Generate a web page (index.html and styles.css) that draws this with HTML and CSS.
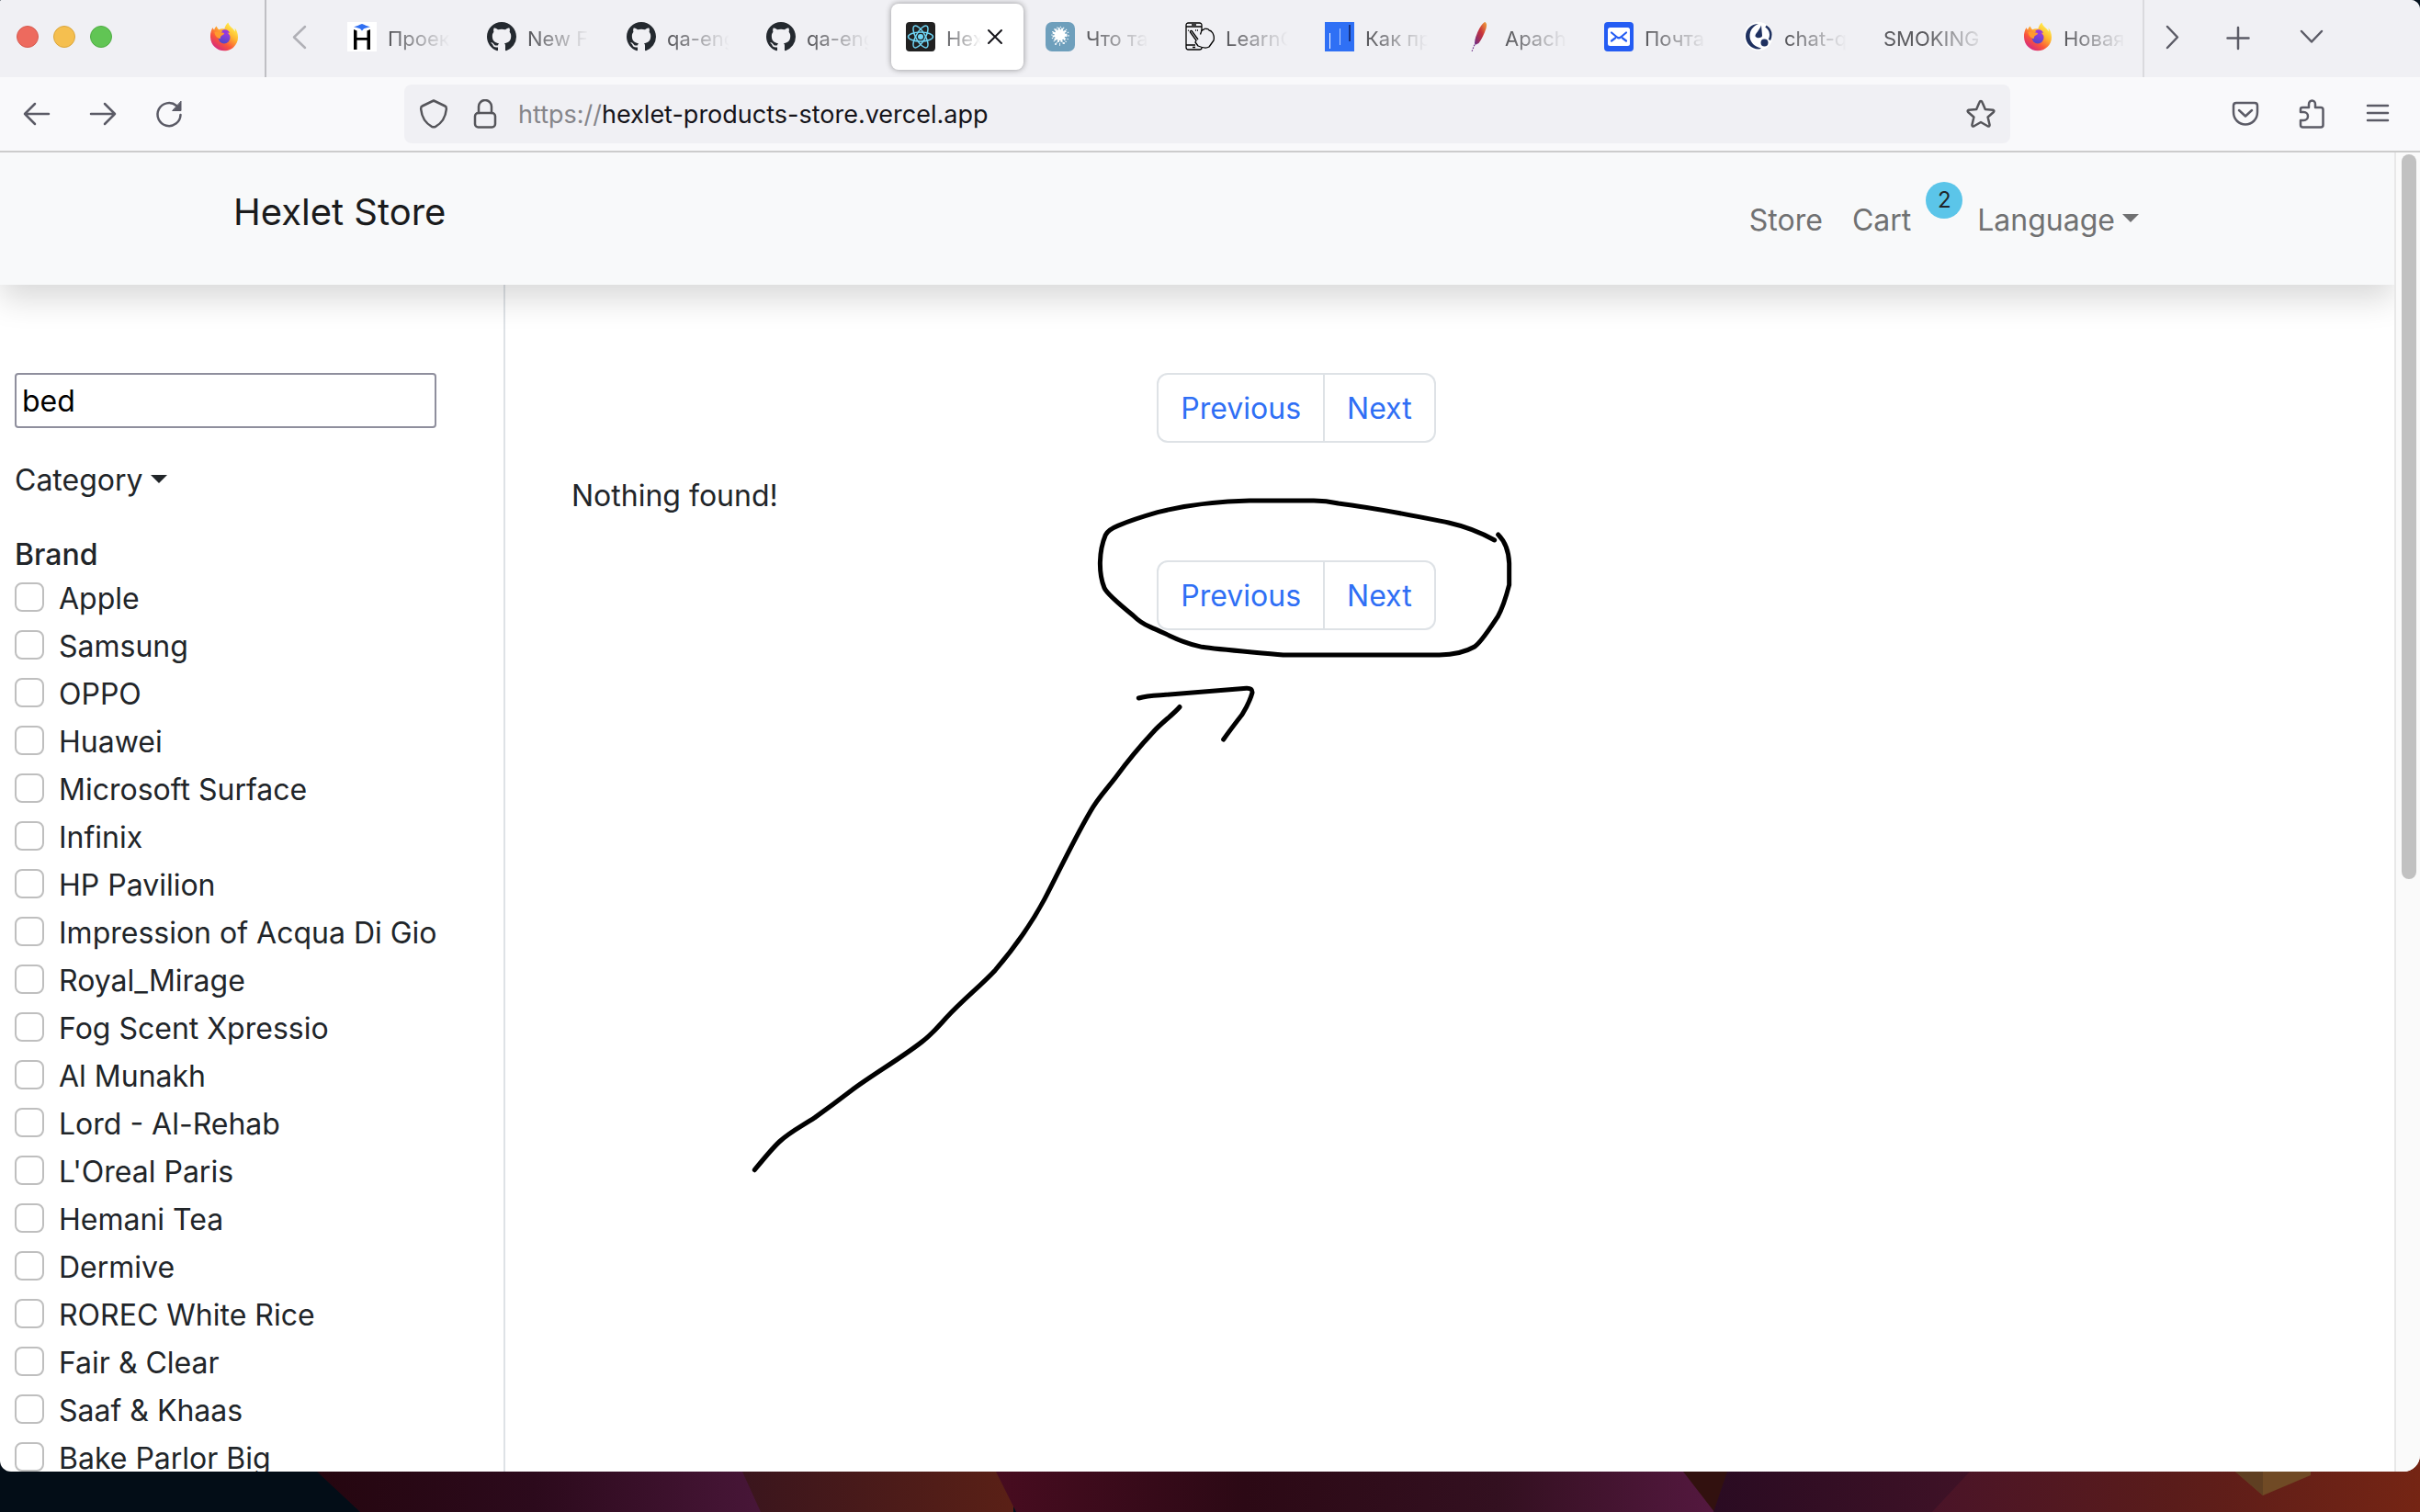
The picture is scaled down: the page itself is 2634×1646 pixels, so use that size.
FILE: index.html
```html
<!DOCTYPE html>
<html lang="en">
<head>
<meta charset="utf-8">
<meta name="viewport" content="width=device-width, initial-scale=1">
<title>Hexlet Store</title>
<link rel="stylesheet" href="styles.css">
</head>
<body>
<svg class="sprite" aria-hidden="true">
  <defs>
    <linearGradient id="fx-body" x1="0.85" y1="0.1" x2="0.2" y2="1">
      <stop offset="0" stop-color="#fff44f"/><stop offset="0.35" stop-color="#ffb22e"/>
      <stop offset="0.65" stop-color="#f9553b"/><stop offset="1" stop-color="#d0208c"/>
    </linearGradient>
    <linearGradient id="fx-globe" x1="0.6" y1="0" x2="0.3" y2="1">
      <stop offset="0" stop-color="#a43be0"/><stop offset="1" stop-color="#4a48c8"/>
    </linearGradient>
    <linearGradient id="feather" x1="1" y1="0" x2="0" y2="1">
      <stop offset="0" stop-color="#f2a63a"/><stop offset="0.45" stop-color="#c8323a"/><stop offset="1" stop-color="#6d2c86"/>
    </linearGradient>
    <symbol id="firefox" viewBox="0 0 32 32">
      <path fill="url(#fx-body)" d="M20.5 0.5c-2 1.600-3.600 4.200-4.200 7-2-.7-4.300-.4-6 .8C9 7.400 8 5.800 7.900 4.600 6.500 5.500 5.500 7 5.200 8.600 4.400 8 3.800 7 3.600 6 1.700 9 .8 12.500 1 16.500 1.300 25 8 31.300 16 31.300S31 25 31 16.800c0-4.500-1.500-8.300-3.500-10.300.3 1.300.4 2.600.2 3.900C26 6 21.500 5.500 20.500.5z"/>
      <circle cx="16" cy="17" r="6.500" fill="url(#fx-globe)"/>
      <path fill="#9538dc" d="M13 10c3-3.500 8-1.500 9 2-2-.8-3.800.5-5 .5z"/>
      <path fill="#ff9a2e" d="M5.500 11c3-1 5 .2 7.500.6 1.200.2 3 .1 3 .8-.2 1.500-2.600 1.800-3.600 3-.6.900-.3 2.200-1.200 2.800-3-.700-5.400-3.500-5.700-7.200z"/>
    </symbol>
    <symbol id="github" viewBox="0 0 16 16">
      <path fill="#24292f" d="M8 0C3.580 0 0 3.580 0 8c0 3.540 2.290 6.530 5.470 7.590.4.070.55-.17.55-.38 0-.19-.010-.82-.010-1.490-2.010.37-2.530-.49-2.690-.94-.09-.23-.48-.94-.82-1.130-.28-.15-.68-.52-.01-.53.63-.01 1.080.58 1.230.82.72 1.210 1.870.87 2.330.66.07-.52.28-.87.51-1.070-1.780-.2-3.640-.89-3.640-3.950 0-.87.31-1.590.82-2.150-.08-.2-.36-1.020.08-2.120 0 0 .67-.21 2.200.82.64-.18 1.320-.27 2-.27s1.360.09 2 .27c1.530-1.040 2.200-.82 2.200-.82.44 1.100.16 1.920.08 2.120.51.56.82 1.270.82 2.150 0 3.070-1.870 3.750-3.650 3.950.29.25.54.73.54 1.480 0 1.070-.01 1.930-.01 2.200 0 .21.15.46.55.38A8.010 8.010 0 0 0 16 8c0-4.420-3.580-8-8-8z"/>
    </symbol>
  </defs>
</svg>

<div class="window">
  <div class="tabstrip">
    <div class="pinned">
      <span class="light light-close"></span><span class="light light-min"></span><span class="light light-max"></span>
      <button class="pin" type="button" aria-label="Firefox"><svg class="ico32"><use href="#firefox"/></svg></button>
    </div>
    <button class="scroll-left" type="button" aria-label="Scroll tabs left"><svg class="line-icon muted" viewBox="0 0 32 32" width="32" height="32"><path d="M22 5L10 16.500 22 28"/></svg></button>
    <div class="tabs" role="tablist">
      <button class="tab" role="tab" type="button">
        <svg class="ico32" viewBox="0 0 32 32"><path fill="#fff" d="M0 0h32v32H0z"/><path fill="#2f6ff2" d="M16 2c3 .8 5 2.500 9 3.200-3 1-5 1.200-7 2L16 9.500 14 7.200c-2-.8-4-1-7-2C11 4.500 13 2.800 16 2z"/><path fill="#000" d="M7 8l3.500 1.500V17h11V9.500L25 8v22h-3.500V19.800h-11V30H7z"/></svg>
        <span class="tab-label">Проекты</span></button>
      <button class="tab" role="tab" type="button"><svg class="ico32"><use href="#github"/></svg><span class="tab-label">New File</span></button>
      <button class="tab" role="tab" type="button"><svg class="ico32"><use href="#github"/></svg><span class="tab-label">qa-engine</span></button>
      <button class="tab" role="tab" type="button"><svg class="ico32"><use href="#github"/></svg><span class="tab-label">qa-engine</span></button>
      <button class="tab active" role="tab" type="button" aria-selected="true">
        <svg class="ico32" viewBox="0 0 32 32"><rect width="32" height="32" rx="4" fill="#212121"/><g fill="none" stroke="#6fd5f5" stroke-width="1.500"><ellipse cx="16" cy="16" rx="13.500" ry="5"/><ellipse cx="16" cy="16" rx="13.500" ry="5" transform="rotate(60 16 16)"/><ellipse cx="16" cy="16" rx="13.500" ry="5" transform="rotate(120 16 16)"/></g><circle cx="16" cy="16" r="3" fill="#6fd5f5"/></svg>
        <span class="tab-label">Hexlet</span>
        <svg class="tab-close" viewBox="0 0 18 18"><path d="M2 2l14 14M16 2L2 16"/></svg></button>
      <button class="tab" role="tab" type="button">
        <svg class="ico32" viewBox="0 0 32 32"><rect width="32" height="32" rx="7" fill="#6e9fbc"/><circle cx="15.500" cy="14" r="6" fill="#fff"/><g fill="none" stroke="#fff"><circle cx="15.500" cy="14" r="6.500" stroke-width="3" stroke-dasharray="2 1.500"/><circle cx="16" cy="14.500" r="9" stroke-width="1.500" stroke-dasharray="1 2.500"/><path d="M10 24h2M15 25h1M19 23h2" stroke-width="1.500"/></g></svg>
        <span class="tab-label">Что такое</span></button>
      <button class="tab" role="tab" type="button">
        <svg class="ico32" viewBox="0 0 32 32" fill="none" stroke="#000" stroke-width="1.300" stroke-linejoin="round"><path d="M18 10V3.500Q18 1 15.500 1h-12Q1 1 1 3.500v24Q1 30 3.500 30h12q2.500 0 2.500-2M1 5h17M1 25h10M7 3h5M8 27.500h3"/><path d="M14 19L7 9.500q-1.500-.5-1.500 1.500L12 20l-1 2 3 4q8 3.500 12 1l5-7q1-4-1-8-2-3-4-3-1-2-3-1.500-2-1-3 1-2-.5-2.500 2l-1 3"/><path d="M3 9l2 1M11 9h3" stroke-dasharray="1 1"/></svg>
        <span class="tab-label">LearnQA</span></button>
      <button class="tab" role="tab" type="button">
        <svg class="ico32" viewBox="0 0 32 32"><path fill="#2f70f5" d="M0 0h32v32H0z"/><path fill="#fff" d="M5 12h1v17H5z"/><path fill="#b8d0ff" d="M16 7h1v18h-1z"/><path fill="#16307c" d="M26 3h2v18h-2z"/></svg>
        <span class="tab-label">Как пройти</span></button>
      <button class="tab" role="tab" type="button">
        <svg class="ico32" viewBox="0 0 32 32"><path fill="url(#feather)" d="M22 0c2.500.5 2.500 4 1.500 7-2 6-5 12-8 16l-4 2c-1-3 0-8 2-12 2-5 5-11 8.500-13z"/><path fill="none" stroke="#6d2c86" stroke-width="1.200" stroke-dasharray="1.500 1.500" d="M12 22l-4 10"/></svg>
        <span class="tab-label">Apache</span></button>
      <button class="tab" role="tab" type="button">
        <svg class="ico32" viewBox="0 0 32 32"><rect width="32" height="32" rx="4" fill="#245cf3"/><rect x="4" y="6" width="24" height="20" rx="2.500" fill="#fff"/><path d="M8 11.500l6 5q2 1.500 4 0l6-5M8 20.500l4-3M24 20.500l-4-3" fill="none" stroke="#245cf3" stroke-width="2.200" stroke-linecap="round"/></svg>
        <span class="tab-label">Почта Mail</span></button>
      <button class="tab" role="tab" type="button">
        <svg class="ico32" viewBox="0 0 32 32"><circle cx="16" cy="15.500" r="15.500" fill="#fff"/><path fill="#1f3160" d="M16 2C8 2 2 8 2 15.500S8 29.500 16 29.500q2 0 3-1C12 27 6.500 22 6.500 15.500 6.500 9 10 4.500 16 2z"/><path fill="#1f3160" d="M19 3.500l1 11c.5 3-6 4-7.500 1C12 13 17 9 19 3.500z"/><circle cx="22.500" cy="22.500" r="4" fill="#1f3160"/><path d="M24 4.500c5 3.500 6.500 9 4 15" fill="none" stroke="#1f3160" stroke-width="2.500"/></svg>
        <span class="tab-label">chat-quiz</span></button>
      <button class="tab" role="tab" type="button"><span class="tab-label">SMOKING</span></button>
      <button class="tab" role="tab" type="button"><svg class="ico32"><use href="#firefox"/></svg><span class="tab-label">Новая вкладка</span></button>
    </div>
    <div class="tab-tools">
      <button type="button" aria-label="Scroll tabs right"><svg class="line-icon" viewBox="0 0 32 32" width="32" height="32"><path d="M11 5l11 11.500L11 28"/></svg></button>
      <button type="button" aria-label="New tab"><svg class="line-icon" viewBox="0 0 32 32" width="32" height="32"><path d="M16 6v23M4.500 17.500h23"/></svg></button>
      <button class="all-tabs" type="button" aria-label="List all tabs"><svg class="line-icon" viewBox="0 0 32 32" width="32" height="32"><path d="M5 10l11 11.500L27 10"/></svg></button>
    </div>
  </div>

  <div class="toolbar">
    <div class="nav-buttons">
      <button type="button" aria-label="Back"><svg class="line-icon" viewBox="0 0 32 32" width="32" height="32"><path d="M29 16H3M14 5L3 16l11 11"/></svg></button>
      <button type="button" aria-label="Forward"><svg class="line-icon" viewBox="0 0 32 32" width="32" height="32"><path d="M3 16h26M18 5l11 11-11 11"/></svg></button>
      <button type="button" aria-label="Reload"><svg class="line-icon" viewBox="0 0 32 32" width="32" height="32"><path d="M28.500 17A12.500 12.500 0 1 1 24 7"/><path class="fill" d="M29 2.500v10h-9z"/></svg></button>
    </div>
    <div class="urlbar">
      <svg class="line-icon dark" viewBox="0 0 32 32" width="32" height="32"><path d="M16 1.500L28.500 7.500Q30 8 29.800 11 28.500 24 18 29.800q-2 1-4 0Q3.500 24 2.200 11 2 8 3.500 7.500z"/></svg>
      <svg class="line-icon dark" viewBox="0 0 32 32" width="32" height="32"><rect x="5" y="15" width="22" height="15.500" rx="3.500"/><path d="M9 15V8a7 7 0 0 1 14 0v7"/></svg>
      <p class="url"><span>https://</span>hexlet-products-store.vercel.app</p>
      <button type="button" aria-label="Bookmark this page"><svg class="line-icon dark" viewBox="0 0 32 32" width="32" height="32"><path d="M16 2q1 0 1.600 1.500l3.200 7.500 8.500.8q1.800.5.600 2.200l-6.300 5.500 2 8.500q0 2-1.800 1.500L16 25l-7.800 4.500q-1.800.5-1.800-1.500l2-8.500L2.100 14q-1.200-1.700.6-2.200l8.500-.8 3.200-7.500Q15 2 16 2z"/></svg></button>
    </div>
    <div class="tools">
      <button type="button" aria-label="Save to Pocket"><svg class="line-icon" viewBox="0 0 32 32" width="32" height="32"><path d="M6 4h20q3 0 3 3v7c0 8-6 13.500-13 13.500S3 22 3 14V7q0-3 3-3z"/><path d="M9 12l7 6.500 7-6.500"/></svg></button>
      <button type="button" aria-label="Extensions"><svg class="line-icon" viewBox="0 0 32 32" width="32" height="32"><path d="M4 13v-2q0-2 2-2h7V5.500a3.500 4 0 0 1 7 0V9h6q2.500 0 2.500 2.500V28q0 2.500-2.500 2.500H6.500Q4 30.500 4 28v-5h3.500a4.500 4.500 0 0 0 0-9H4z"/></svg></button>
      <button type="button" aria-label="Menu"><svg class="line-icon" viewBox="0 0 32 32" width="32" height="32"><path d="M5 7h22M5 15h22M5 23h22"/></svg></button>
    </div>
  </div>

  <div class="viewport">
    <div class="page">
      <header class="store-header">
        <a class="brand" href="#">Hexlet Store</a>
        <nav class="store-nav">
          <a href="#">Store</a>
          <a href="#">Cart</a>
          <span class="badge">2</span>
          <a class="dropdown" href="#">Language</a>
        </nav>
      </header>
      <div class="store-body">
        <aside class="filters">
          <input class="search" type="text" value="bed" aria-label="Search">
          <button class="dropdown category" type="button">Category</button>
          <fieldset class="brands">
            <legend>Brand</legend>
            <label><input type="checkbox">Apple</label>
            <label><input type="checkbox">Samsung</label>
            <label><input type="checkbox">OPPO</label>
            <label><input type="checkbox">Huawei</label>
            <label><input type="checkbox">Microsoft Surface</label>
            <label><input type="checkbox">Infinix</label>
            <label><input type="checkbox">HP Pavilion</label>
            <label><input type="checkbox">Impression of Acqua Di Gio</label>
            <label><input type="checkbox">Royal_Mirage</label>
            <label><input type="checkbox">Fog Scent Xpressio</label>
            <label><input type="checkbox">Al Munakh</label>
            <label><input type="checkbox">Lord - Al-Rehab</label>
            <label><input type="checkbox">L'Oreal Paris</label>
            <label><input type="checkbox">Hemani Tea</label>
            <label><input type="checkbox">Dermive</label>
            <label><input type="checkbox">ROREC White Rice</label>
            <label><input type="checkbox">Fair &amp; Clear</label>
            <label><input type="checkbox">Saaf &amp; Khaas</label>
            <label><input type="checkbox">Bake Parlor Big</label>
          </fieldset>
        </aside>
        <main class="results">
          <nav class="pagination" aria-label="Pages, top"><a href="#">Previous</a><a href="#">Next</a></nav>
          <p class="empty">Nothing found!</p>
          <nav class="pagination" aria-label="Pages, bottom"><a href="#">Previous</a><a href="#">Next</a></nav>
        </main>
      </div>
    </div>
    <div class="scrollbar"><div class="thumb"></div></div>
  </div>
</div>

<svg class="wallpaper" viewBox="0 0 2634 60" preserveAspectRatio="none" aria-hidden="true">
  <defs>
    <linearGradient id="w1"><stop offset="0" stop-color="#25060f"/><stop offset="0.5" stop-color="#2c0a1c"/><stop offset="1" stop-color="#481638"/></linearGradient>
    <linearGradient id="w2"><stop offset="0" stop-color="#3a151d"/><stop offset="1" stop-color="#5a2016"/></linearGradient>
    <linearGradient id="w3"><stop offset="0" stop-color="#480c20"/><stop offset="0.35" stop-color="#2c0915"/><stop offset="0.7" stop-color="#331020"/><stop offset="1" stop-color="#54183f"/></linearGradient>
    <linearGradient id="w4"><stop offset="0" stop-color="#2a0b22"/><stop offset="1" stop-color="#421327"/></linearGradient>
    <linearGradient id="w5"><stop offset="0" stop-color="#4a1428"/><stop offset="0.5" stop-color="#5a1c1a"/><stop offset="1" stop-color="#752514"/></linearGradient>
  </defs>
  <path fill="#030d17" d="M0 0h400v60H0z"/>
  <path fill="url(#w1)" d="M336 0h480l14 60H392L345 16z"/>
  <path fill="url(#w2)" d="M803 0h300v60H828L808 16z"/>
  <path fill="#32110f" d="M1820 0h70v60h-40z"/>
  <path fill="url(#w3)" d="M1080 0h747l5 16 34 44h-760l-22-44z"/>
  <path fill="url(#w4)" d="M1883 0h300v60h-318l15-44z"/>
  <path fill="url(#w5)" d="M2151 0h483v60h-531l41-44z"/>
  <path fill="#704a25" d="M2428 0h87v20l-52 22-30-26z"/>
  <path fill="#5f3f22" d="M2428 0h35v42l-30-26z"/>
</svg>

<svg class="annotation" viewBox="0 0 2634 1646" aria-hidden="true">
  <g transform="translate(1180 380) scale(0.33333)">
    <path d="M1340 624Q1270 585 1190 567C1080 545 960 520 830 504Q790 495 750 495H540C430 497 340 508 240 533Q160 556 110 577Q78 590 70 607C48 660 46 730 66 780Q74 800 160 870Q185 895 215 907C280 935 320 960 385 973C440 982 560 990 650 999H1160Q1230 998 1275 972C1295 960 1330 905 1350 875Q1370 840 1388 770V700Q1386 640 1352 606"/>
    <path d="M178 1140Q200 1133 250 1130L530 1108Q550 1107 549 1122Q540 1155 515 1195Q480 1240 455 1275"/>
  </g>
  <path transform="translate(790 740) scale(0.33333 0.35714)" d="M1482 83C1460 107 1420 133 1395 160Q1330 225 1275 295C1240 338 1215 360 1190 402C1130 498 1080 600 1040 670Q980 775 880 885C830 935 780 970 720 1030Q670 1083 640 1104C570 1155 480 1203 410 1252Q350 1295 290 1335C240 1365 210 1378 175 1408Q150 1430 94 1494"/>
</svg>
</body>
</html>
```
FILE: styles.css
```css
*, *::before, *::after { box-sizing: border-box; }

body {
  margin: 0;
  height: 100vh;
  display: flex;
  flex-direction: column;
  overflow: hidden;
  position: relative;
  background: #04111d;
  color: #212529;
  font: 32px/48px Inter, "Liberation Sans", sans-serif;
}

button {
  border: 0;
  padding: 0;
  background: none;
  color: inherit;
  font: inherit;
}

a { color: inherit; text-decoration: none; }
p { margin: 0; }
.sprite { position: absolute; width: 0; height: 0; }
.ico32 { width: 32px; height: 32px; flex: none; }

.window {
  flex: 1;
  min-height: 0;
  position: relative;
  z-index: 1;
  display: flex;
  flex-direction: column;
  overflow: hidden;
  border-radius: 2px 10px 18px 12px;
  background: #fff;
}

/* Tab strip */
.tabstrip {
  display: flex;
  height: 84px;
  flex: none;
  background: #f0f0f4;
  font-size: 22px;
  line-height: 32px;
}

.pinned {
  display: flex;
  align-items: center;
  gap: 16px;
  width: 290px;
  padding: 0 0 4px 18px;
  border-right: 2px solid #bfbfc4;
}

.light { width: 24px; height: 24px; border-radius: 50%; border: 1px solid; }
.light-close { background: #ed6a5e; border-color: #d65a4f; }
.light-min { background: #f5bf4f; border-color: #dba63c; }
.light-max { background: #61c554; border-color: #4fac43; }
.pin { display: flex; margin-left: 90px; }

.line-icon {
  display: block;
  flex: none;
  fill: none;
  stroke: #5b5b66;
  stroke-width: 2.5;
  stroke-linecap: round;
  stroke-linejoin: round;
}
.line-icon .fill { fill: #5b5b66; stroke-width: 1; }
.line-icon.muted { stroke: #b0b0b6; }
.line-icon.dark { stroke: #55555a; }

.scroll-left { padding: 0 20px 4px; }

.tabs {
  display: flex;
  flex: 1;
  gap: 8px;
  min-width: 0;
  overflow: hidden;
  padding: 4px 0 8px 0;
  border-right: 2px solid #dadade;
}

.tab {
  display: flex;
  align-items: center;
  gap: 12px;
  width: 144px;
  flex: none;
  padding: 0 16px;
  border-radius: 8px;
  color: #5a5a5e;
  text-align: left;
}

.tab-label {
  flex: 1;
  min-width: 0;
  padding-top: 4px;
  overflow: hidden;
  white-space: nowrap;
  -webkit-mask-image: linear-gradient(to left, transparent, #000 64px);
  mask-image: linear-gradient(to left, transparent, #000 64px);
}

.tab.active { background: #fff; box-shadow: 0 0 6px rgba(0, 0, 0, 0.4); gap: 6px; }
.tab.active .tab-label {
  padding-left: 6px;
  -webkit-mask-image: linear-gradient(to left, transparent, #000 40px);
  mask-image: linear-gradient(to left, transparent, #000 40px);
}
.tab-close { width: 18px; height: 18px; margin-right: 6px; flex: none; stroke: #15141a; stroke-width: 2; stroke-linecap: round; }

.tab-tools { display: flex; align-items: center; gap: 40px; padding: 0 102px 4px 14px; }
.tab-tools button { width: 32px; height: 32px; }
.tab-tools .all-tabs { margin-left: 8px; }

/* Toolbar */
.toolbar {
  display: flex;
  align-items: center;
  height: 82px;
  flex: none;
  padding-right: 30px;
  background: #f9f9fb;
  border-bottom: 2px solid #ccc;
}

.nav-buttons { display: flex; gap: 40px; width: 440px; padding-left: 24px; }

.urlbar {
  display: flex;
  align-items: center;
  flex: 1;
  height: 64px;
  padding: 0 16px;
  border-radius: 8px;
  background: #f0f0f4;
  color: #15141a;
  font-size: 27px;
}
.urlbar .line-icon { margin-right: 24px; }
.urlbar button .line-icon { margin-right: 0; }
.url { flex: 1; margin-left: -4px; padding-top: 2px; }
.url span { color: #85858a; }

.tools { display: flex; gap: 40px; padding-left: 240px; }

/* Page */
.viewport { display: flex; flex: 1; min-height: 0; }

.page {
  display: flex;
  flex-direction: column;
  flex: 1;
  min-width: 0;
  overflow: hidden;
}

.store-header {
  display: flex;
  align-items: center;
  justify-content: space-between;
  height: 144px;
  flex: none;
  position: relative;
  z-index: 1;
  padding: 0 278px 0 254px;
  background: #f8f9fa;
  box-shadow: 0 16px 32px rgba(0, 0, 0, 0.15);
}

.brand { padding-bottom: 14px; font-size: 40px; line-height: 60px; color: #1a1b1c; }

.store-nav { display: flex; align-items: center; gap: 16px; color: #707172; }
.store-nav a { padding-top: 3px; }
.store-nav a:first-child { margin-right: 16px; }

.badge {
  width: 40px;
  height: 40px;
  margin-bottom: 40px;
  border-radius: 50%;
  background: #5bc5e9;
  color: #212529;
  font-size: 24px;
  line-height: 40px;
  text-align: center;
}

.dropdown { display: flex; align-items: center; gap: 8px; }
.dropdown::after {
  content: "";
  margin-bottom: 4px;
  border: 9px solid transparent;
  border-top-color: currentColor;
  border-bottom: 0;
}

.store-body { display: flex; flex: 1; min-height: 0; }

.filters {
  display: flex;
  flex-direction: column;
  align-items: flex-start;
  gap: 33px;
  width: 550px;
  flex: none;
  padding: 96px 73px 0 16px;
  border-right: 2px solid #dee2e6;
}

.search {
  width: 100%;
  height: 60px;
  flex: none;
  padding: 0 6px;
  border: 2px solid #8f8f9d;
  border-radius: 4px;
  background: #fff;
  color: #000;
  font: inherit;
}

.brands { display: flex; flex-direction: column; gap: 4px; margin: 0; padding: 0; border: 0; }
.brands legend { padding: 0; font-weight: 500; }
.brands label { display: flex; align-items: center; gap: 16px; white-space: nowrap; }
.brands input {
  appearance: none;
  width: 32px;
  height: 32px;
  margin: 0 0 4px;
  border: 2px solid #bfbfbf;
  border-radius: 8px;
  background: #fff;
}

.results {
  display: flex;
  flex-direction: column;
  flex: 1;
  padding: 96px 406px 0 72px;
}

.pagination { display: flex; align-self: center; color: #2f6ff5; }
.pagination a { padding: 13px 24px 11px; border: 2px solid #dee2e6; }
.pagination a:first-child { border-radius: 12px 0 0 12px; }
.pagination a:last-child { border-left: 0; border-radius: 0 12px 12px 0; }
.empty { margin: 34px 0 46px; }

.scrollbar {
  width: 28px;
  flex: none;
  padding: 2px 4px 0 6px;
  border-left: 2px solid #e8e8e8;
  background: #fafafa;
}
.thumb { height: 55%; border-radius: 8px; background: #c1c1c1; }

/* Desktop behind the window */
.wallpaper {
  display: block;
  width: 100%;
  height: 60px;
  margin-top: -16px;
  flex: none;
}

/* Hand-drawn marks over the page */
.annotation {
  position: absolute;
  inset: 0;
  z-index: 2;
  width: 100%;
  pointer-events: none;
  fill: none;
  stroke: #000;
  stroke-width: 15;
  stroke-linecap: round;
  stroke-linejoin: round;
}
```
